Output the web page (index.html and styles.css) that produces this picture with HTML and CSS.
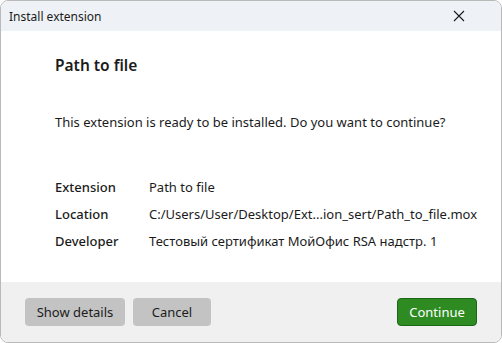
FILE: index.html
```html
<!DOCTYPE html>
<html>
<head>
<meta charset="utf-8">
<link rel="stylesheet" href="styles.css">
</head>
<body>
<div class="window">
  <div class="titlebar">
    <span class="title">Install extension</span>
    <svg class="close" width="12" height="12" viewBox="0 0 12 12"><path d="M1 1L11 11M11 1L1 11" stroke="#1a1a1a" stroke-width="1.1" fill="none"/></svg>
  </div>
  <div class="content">
    <h1 class="heading">Path to file</h1>
    <p class="message">This extension is ready to be installed. Do you want to continue?</p>
    <div class="details">
      <div class="label">Extension</div><div class="value">Path to file</div>
      <div class="label">Location</div><div class="value">C:/Users/User/Desktop/Ext...ion_sert/Path_to_file.mox</div>
      <div class="label">Developer</div><div class="value">Тестовый сертификат МойОфис RSA надстр. 1</div>
    </div>
  </div>
  <div class="footer">
    <button class="btn">Show details</button>
    <button class="btn cancel">Cancel</button>
    <span class="spacer"></span>
    <button class="btn primary">Continue</button>
  </div>
</div>
</body>
</html>
```
FILE: styles.css
```css
* { box-sizing: border-box; }
html, body { margin: 0; padding: 0; background: #ffffff; }
body { font-family: "Noto Sans", "Open Sans", sans-serif; color: #1b1b1b; }
.window {
  width: 502px; height: 343px;
  border: 1px solid #b9b9b9;
  border-radius: 8px;
  overflow: hidden;
  display: flex; flex-direction: column;
  background: #fff;
}
.titlebar {
  height: 30px; flex: none;
  background: #eef2f6;
  display: flex; align-items: center;
  padding: 0 0 0 8px;
}
.title { font-size: 12px; flex: 1; }
.close { margin-right: 36px; }
.content { flex: 1; padding: 24px 0 0 54px; }
.heading { margin: 0; font-size: 15.5px; font-weight: 600; line-height: 20px; }
.message { margin: 38px 0 0; font-size: 13px; line-height: 18px; }
.details {
  margin-top: 47px;
  display: grid; grid-template-columns: 94px auto;
  row-gap: 9px; font-size: 13px; line-height: 18px;
}
.label { font-weight: 500; }
.footer {
  height: 60px; flex: none;
  background: #f0f0f0;
  display: flex; align-items: flex-start;
  padding: 16px 24px 0 24px;
  gap: 8px;
}
.spacer { flex: 1; }
.btn {
  height: 28px; border: none; border-radius: 4px;
  background: #c3c3c3; color: #1b1b1b;
  font-family: inherit; font-size: 13px;
  padding: 0; width: 100px;
}
.cancel { width: 78px; }
.primary { width: 80px; background: #2d8b22; border: 1px solid #1d6615; color: #fff; }
```
